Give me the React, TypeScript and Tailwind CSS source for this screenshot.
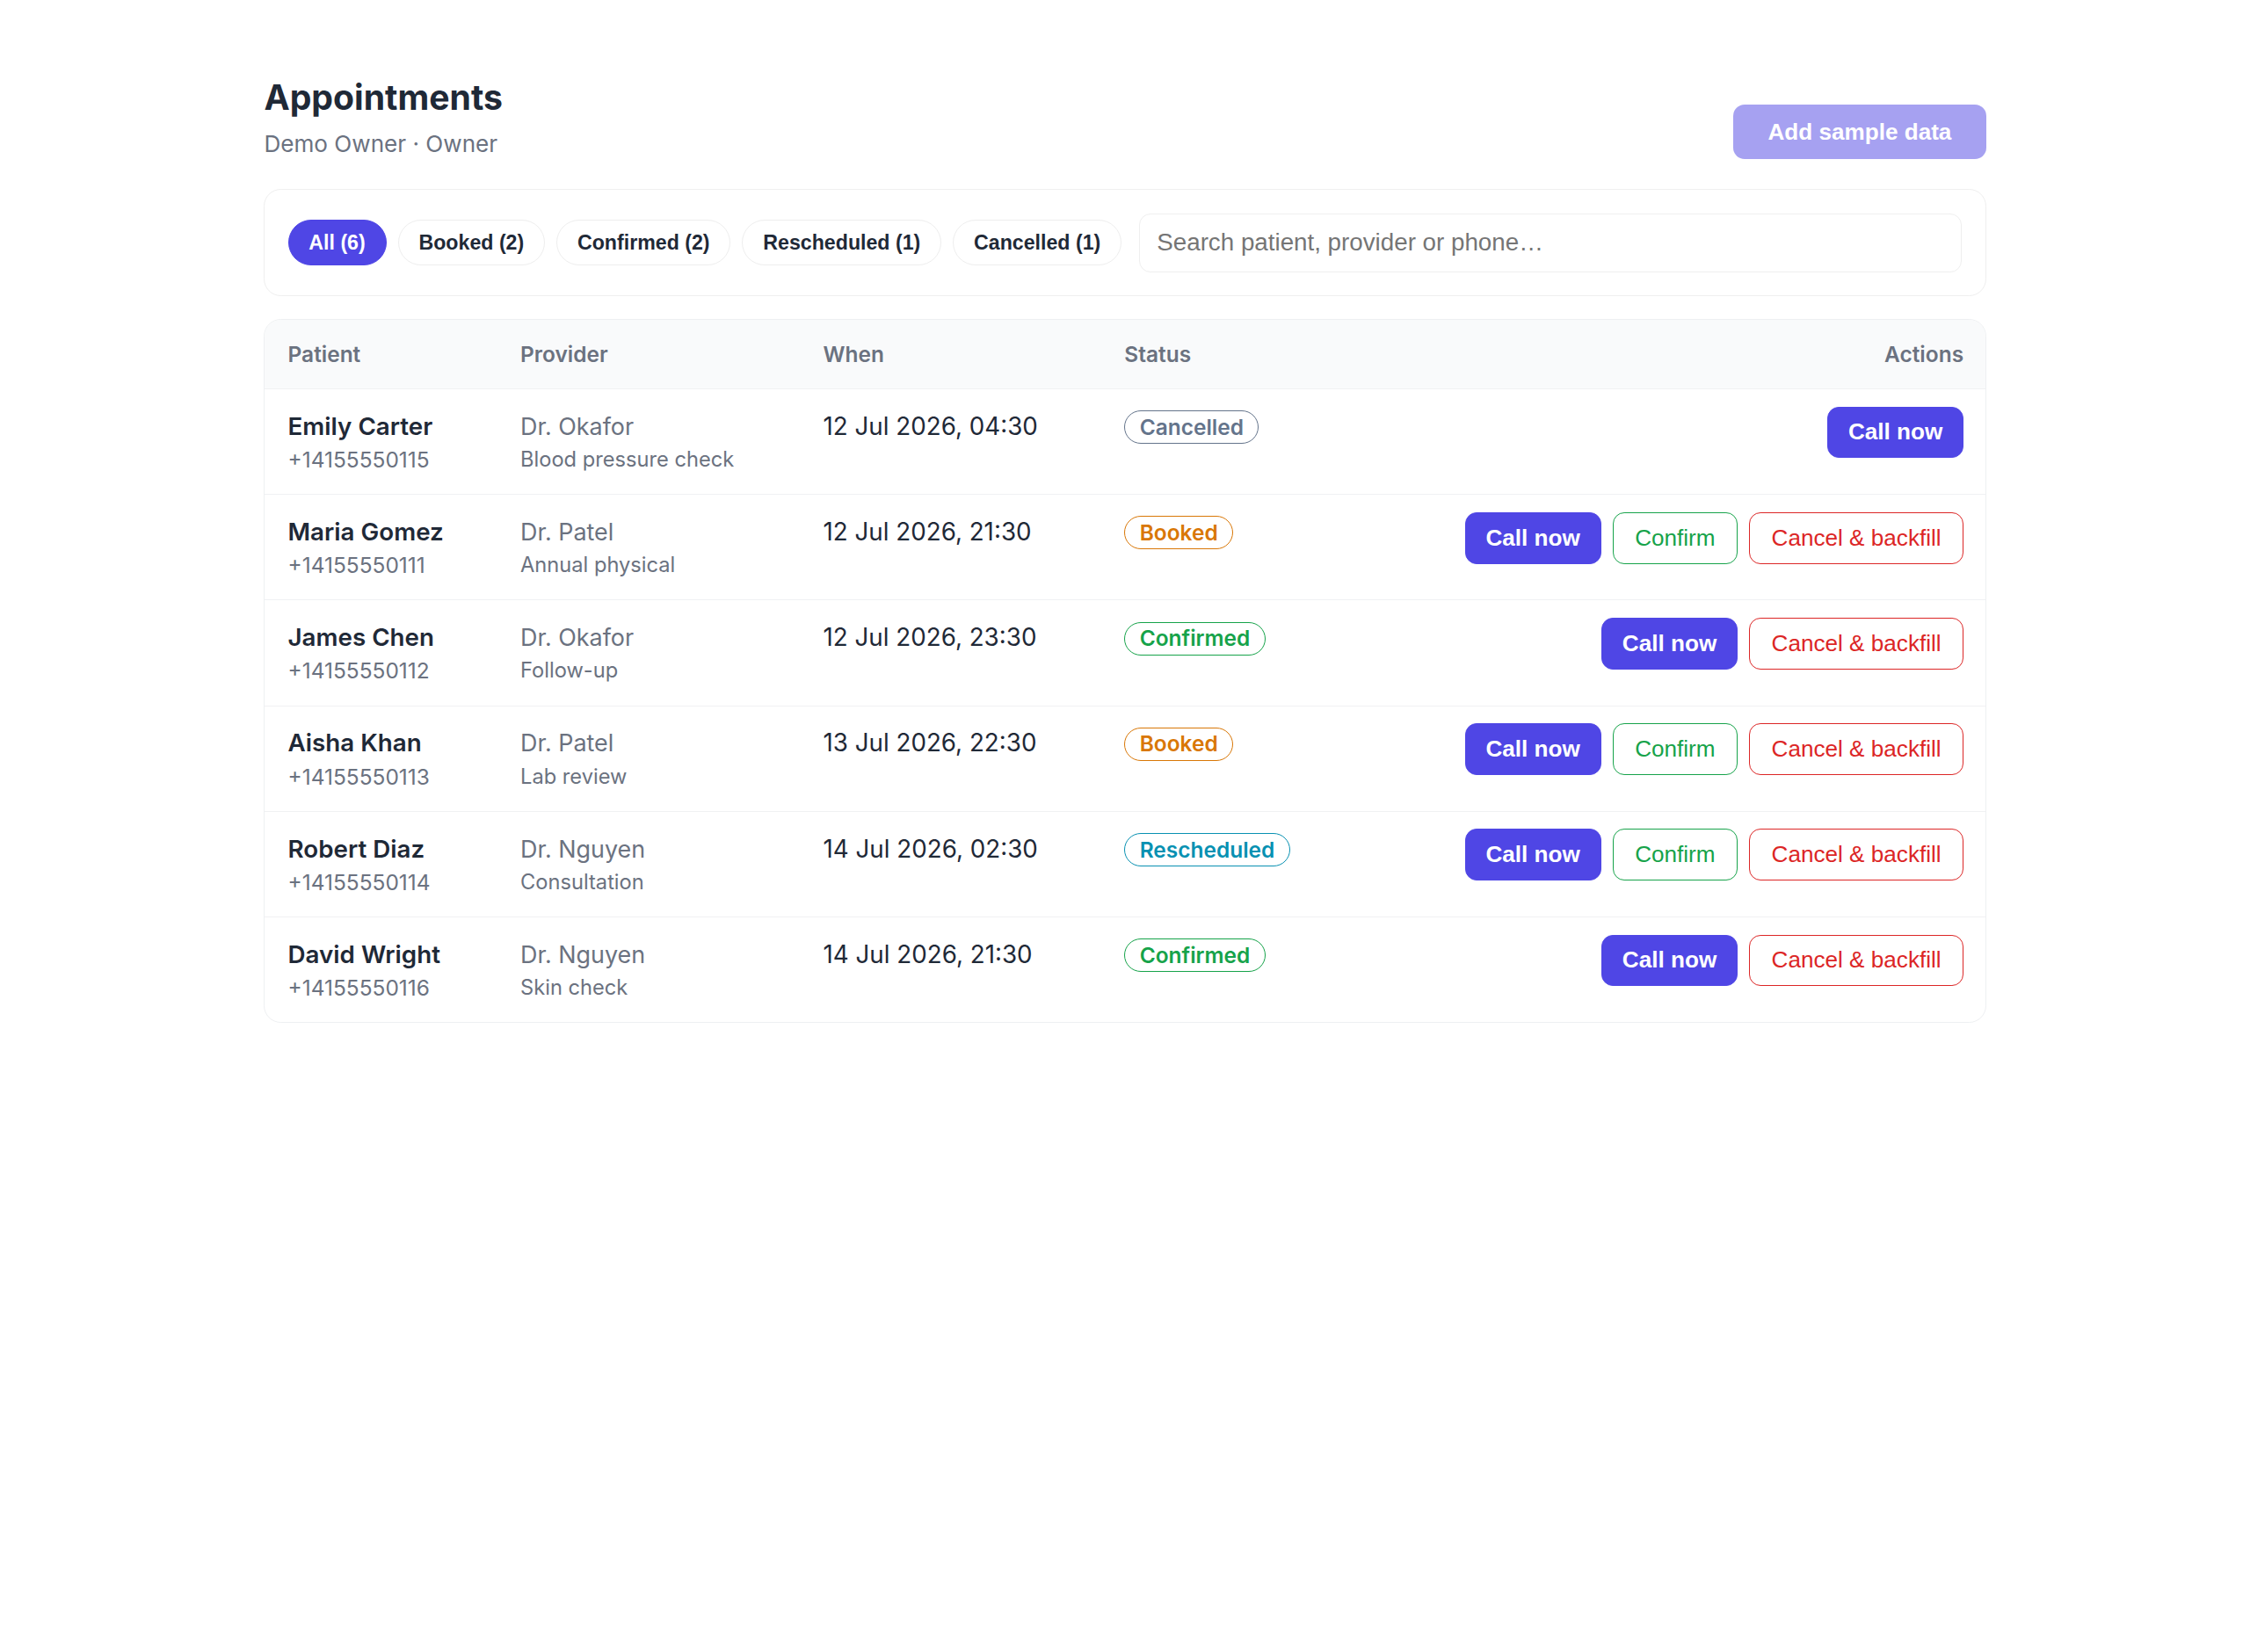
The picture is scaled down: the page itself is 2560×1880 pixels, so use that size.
import React from "react";

type Action = "call" | "confirm" | "cancel";
type Status = "Cancelled" | "Booked" | "Confirmed" | "Rescheduled";

interface Row {
  name: string;
  phone: string;
  provider: string;
  reason: string;
  when: string;
  status: Status;
  actions: Action[];
}

const rows: Row[] = [
  { name: "Emily Carter", phone: "+14155550115", provider: "Dr. Okafor", reason: "Blood pressure check", when: "12 Jul 2026, 04:30", status: "Cancelled", actions: ["call"] },
  { name: "Maria Gomez", phone: "+14155550111", provider: "Dr. Patel", reason: "Annual physical", when: "12 Jul 2026, 21:30", status: "Booked", actions: ["call", "confirm", "cancel"] },
  { name: "James Chen", phone: "+14155550112", provider: "Dr. Okafor", reason: "Follow-up", when: "12 Jul 2026, 23:30", status: "Confirmed", actions: ["call", "cancel"] },
  { name: "Aisha Khan", phone: "+14155550113", provider: "Dr. Patel", reason: "Lab review", when: "13 Jul 2026, 22:30", status: "Booked", actions: ["call", "confirm", "cancel"] },
  { name: "Robert Diaz", phone: "+14155550114", provider: "Dr. Nguyen", reason: "Consultation", when: "14 Jul 2026, 02:30", status: "Rescheduled", actions: ["call", "confirm", "cancel"] },
  { name: "David Wright", phone: "+14155550116", provider: "Dr. Nguyen", reason: "Skin check", when: "14 Jul 2026, 21:30", status: "Confirmed", actions: ["call", "cancel"] },
];

const badgeClass: Record<Status, string> = {
  Cancelled: "border-[#64748b] text-[#64748b]",
  Booked: "border-[#d97706] text-[#d97706]",
  Confirmed: "border-[#16a34a] text-[#16a34a]",
  Rescheduled: "border-[#0891b2] text-[#0891b2]",
};

const filters = [
  { label: "All (6)", active: true },
  { label: "Booked (2)", active: false },
  { label: "Confirmed (2)", active: false },
  { label: "Rescheduled (1)", active: false },
  { label: "Cancelled (1)", active: false },
];

const btnFont = "font-['Liberation_Sans',Arial,sans-serif]";

function ActionButton({ kind }: { kind: Action }) {
  if (kind === "call") {
    return (
      <button className={`${btnFont} h-9 rounded-lg border border-[#4f46e5] bg-[#4f46e5] px-3.5 text-base font-bold leading-[18px] text-white`}>
        Call now
      </button>
    );
  }
  if (kind === "confirm") {
    return (
      <button className={`${btnFont} h-9 rounded-lg border border-[#16a34a] bg-white px-[15px] text-base leading-[18px] text-[#16a34a]`}>
        Confirm
      </button>
    );
  }
  return (
    <button className={`${btnFont} h-9 rounded-lg border border-[#dc2626] bg-white px-[15px] text-base leading-[18px] text-[#dc2626]`}>
      Cancel &amp; backfill
    </button>
  );
}

export default function App() {
  return (
    <div className="bg-white [zoom:1.63265]">
      <div className="mx-auto max-w-[1200px] pt-13 font-['Inter',sans-serif] text-[#1f2937]">
        <div className="flex items-end justify-between">
          <div>
            <h1 className="text-2xl font-bold leading-8 text-[#1f2937]">Appointments</h1>
            <p className="mt-1 text-base leading-6 text-[#6b7280]">Demo Owner · Owner</p>
          </div>
          <button
            disabled
            className={`${btnFont} mb-px rounded-lg bg-[#4f46e5] px-6 py-2.5 text-base font-bold leading-[18px] text-white opacity-50`}
          >
            Add sample data
          </button>
        </div>

        <div className="mt-5 flex items-center gap-3 rounded-xl border border-[#efefef] bg-white p-4">
          <div className="flex items-center gap-2">
            {filters.map((f) =>
              f.active ? (
                <button
                  key={f.label}
                  className={`${btnFont} h-8 rounded-full border border-[#4f46e5] bg-[#4f46e5] px-3.5 text-[14.2px] font-bold leading-4 text-white`}
                >
                  {f.label}
                </button>
              ) : (
                <button
                  key={f.label}
                  className={`${btnFont} h-8 rounded-full border border-[#eeeeee] bg-white px-3.5 text-[14.2px] font-bold leading-4 text-[#1f2937]`}
                >
                  {f.label}
                </button>
              )
            )}
          </div>
          <input
            type="text"
            placeholder="Search patient, provider or phone…"
            className={`${btnFont} h-[41px] flex-1 rounded-lg border border-[#efefef] bg-white px-3 text-[17px] text-[#1f2937] outline-none placeholder:text-[#757575]`}
          />
        </div>

        <div className="mt-4 overflow-hidden rounded-xl border border-[#eef0f2] bg-white">
          <table className="w-full table-fixed border-collapse text-left">
            <colgroup>
              <col className="w-[162px]" />
              <col className="w-[211px]" />
              <col className="w-[210px]" />
              <col className="w-[230px]" />
              <col />
            </colgroup>
            <thead>
              <tr className="bg-[#f9fafb]">
                <th className="px-4 py-3.5 text-[15px] font-semibold leading-5 text-[#6b7280]">Patient</th>
                <th className="px-4 py-3.5 text-[15px] font-semibold leading-5 text-[#6b7280]">Provider</th>
                <th className="px-4 py-3.5 text-[15px] font-semibold leading-5 text-[#6b7280]">When</th>
                <th className="px-4 py-3.5 text-[15px] font-semibold leading-5 text-[#6b7280]">Status</th>
                <th className="py-3.5 pl-4 pr-[15px] text-right text-[15px] font-semibold leading-5 text-[#6b7280]">Actions</th>
              </tr>
            </thead>
            <tbody>
              {rows.map((r) => (
                <tr key={r.phone} className="border-t border-[#f0f1f3]">
                  <td className="px-4 pb-[12.5px] pt-3.5 align-top">
                    <div className="text-[17px] font-semibold leading-6 text-[#1f2937]">{r.name}</div>
                    <div className="text-[15px] leading-[1.5] text-[#6b7280]">{r.phone}</div>
                  </td>
                  <td className="px-4 pb-[12.5px] pt-3.5 align-top">
                    <div className="text-[16.5px] leading-6 text-[#6b7280]">{r.provider}</div>
                    <div className="text-[14.5px] leading-[22.5px] text-[#6b7280]">{r.reason}</div>
                  </td>
                  <td className="px-4 pb-[12.5px] pt-3.5 align-top">
                    <div className="text-[17px] leading-6 text-[#1f2937]">{r.when}</div>
                  </td>
                  <td className="px-4 pb-[12.5px] pt-3.5 align-top">
                    <span
                      className={`inline-block rounded-full border bg-white px-2.5 py-px text-[15px] font-semibold leading-5 ${badgeClass[r.status]}`}
                    >
                      {r.status}
                    </span>
                  </td>
                  <td className="pb-[12.5px] pl-4 pr-[15px] pt-3.5 align-top">
                    <div className="-mt-0.5 flex justify-end gap-2">
                      {r.actions.map((a) => (
                        <ActionButton key={a} kind={a} />
                      ))}
                    </div>
                  </td>
                </tr>
              ))}
            </tbody>
          </table>
        </div>
      </div>
    </div>
  );
}
